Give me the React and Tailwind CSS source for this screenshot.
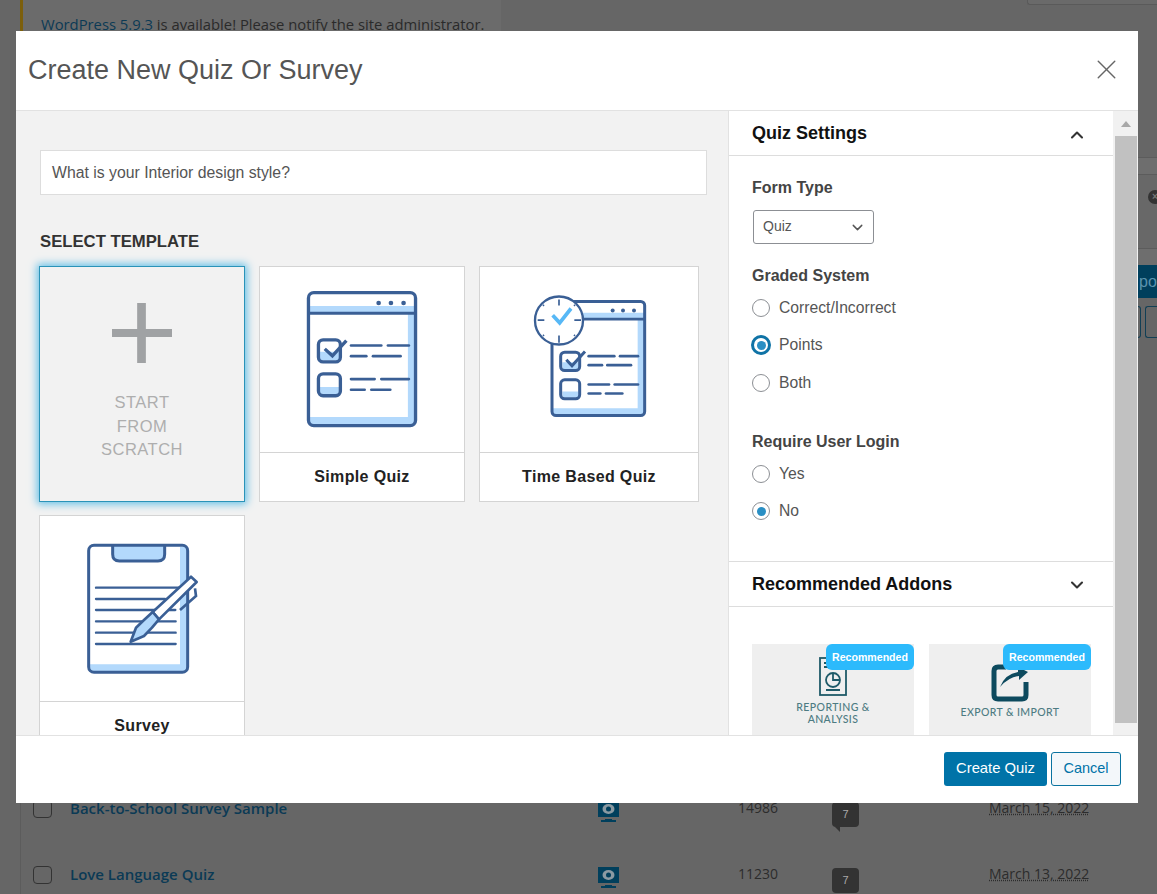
import { ChevronUp, ChevronDown, X } from 'lucide-react';

const blue = '#3a5f95';
const light = '#b3d9fc';

function QuizLines({ rows, width = 8 }) {
  return rows.map(([x1, x2, y], i) => (
    <line key={i} x1={x1} x2={x2} y1={y} y2={y} stroke={blue} strokeWidth={width} strokeLinecap="round" />
  ));
}

function SimpleQuizIcon() {
  return (
    <svg width="118" height="143" viewBox="130 70 354 430" fill="none">
      <rect x="146" y="84" width="322" height="400" rx="16" fill="#fff" />
      <path d="M146 124H468V146H146Z" fill={light} />
      <path d="M445 146H468V470Q468 484 454 484H160Q146 484 146 470V458H445Z" fill={light} />
      <rect x="146" y="84" width="322" height="400" rx="16" stroke={blue} strokeWidth="10" />
      <line x1="146" x2="468" y1="146" y2="146" stroke={blue} strokeWidth="9" />
      <circle cx="357" cy="115" r="7" fill={blue} />
      <circle cx="394" cy="115" r="7" fill={blue} />
      <circle cx="432" cy="115" r="7" fill={blue} />
      <path d="M180 262H238V278Q238 288 226 288H190Q180 288 180 278Z" fill={light} />
      <rect x="176" y="226" width="66" height="66" rx="14" stroke={blue} strokeWidth="10" />
      <path d="M195 253L218 274L260 228" stroke={blue} strokeWidth="10" />
      <path d="M180 368H238V380Q238 391 226 391H190Q180 391 180 380Z" fill={light} />
      <rect x="176" y="328" width="66" height="66" rx="14" stroke={blue} strokeWidth="10" />
      <QuizLines rows={[[274, 365, 243], [385, 448, 243], [274, 320, 275], [340, 423, 275], [274, 345, 344], [365, 448, 344], [274, 315, 376], [335, 392, 376]]} />
    </svg>
  );
}

function TimeQuizIcon() {
  return (
    <svg width="115" height="127" viewBox="155 85 345 380" fill="none" className="mb-[6px]">
      <rect x="215" y="110" width="278" height="342" rx="12" fill="#fff" />
      <path d="M215 144H493V163H215Z" fill={light} />
      <path d="M472 163H493V440Q493 452 481 452H227Q215 452 215 440V430H472Z" fill={light} />
      <rect x="215" y="110" width="278" height="342" rx="12" stroke={blue} strokeWidth="9" />
      <line x1="215" x2="493" y1="163" y2="163" stroke={blue} strokeWidth="8" />
      <circle cx="397" cy="137" r="6" fill={blue} />
      <circle cx="428" cy="137" r="6" fill={blue} />
      <circle cx="461" cy="137" r="6" fill={blue} />
      <circle cx="236" cy="167" r="72" fill="#fff" stroke={blue} strokeWidth="7" />
      <path d="M236 104V122M236 212V234M172 166H192M282 166H302" stroke={blue} strokeWidth="5" />
      <path d="M188 120L191 123M284 120L281 123M188 213L191 210M284 213L281 210" stroke={blue} strokeWidth="5" />
      <path d="M217 151L238 174L272 131" stroke="#57b8f6" strokeWidth="11" />
      <path d="M246 292H294V306Q294 314 284 314H254Q246 314 246 306Z" fill={light} />
      <rect x="241" y="262" width="57" height="55" rx="12" stroke={blue} strokeWidth="9" />
      <path d="M258 285L275 303L314 260" stroke={blue} strokeWidth="9" />
      <path d="M246 380H294V392Q294 399 284 399H254Q246 399 246 392Z" fill={light} />
      <rect x="241" y="345" width="57" height="57" rx="12" stroke={blue} strokeWidth="9" />
      <QuizLines rows={[[325, 402, 274], [419, 473, 274], [325, 365, 301], [381, 452, 301], [325, 386, 359], [403, 473, 359], [325, 360, 386], [377, 426, 386]]} />
    </svg>
  );
}

function SurveyIcon() {
  return (
    <svg width="115" height="135" viewBox="165 90 345 405" fill="none">
      <rect x="176" y="103" width="297" height="381" rx="16" fill="#fff" />
      <path d="M450 107H460Q473 107 473 120V470Q473 484 460 484H190Q176 484 176 470V460H450Z" fill={light} />
      <path d="M248 103V130Q248 150 268 150H384Q404 150 404 130V103Z" fill={light} />
      <rect x="176" y="103" width="297" height="381" rx="16" stroke={blue} strokeWidth="9" />
      <path d="M248 103V130Q248 150 268 150H384Q404 150 404 130V103" stroke={blue} strokeWidth="9" />
      <path d="M198 230H450M198 264H405M198 297H375M412 297H436M198 331H437M198 365H437M198 399H437" stroke={blue} strokeWidth="7" strokeLinecap="round" />
      <path d="M368 303L483 197L500 213L387 325Z" fill="#fff" stroke={blue} strokeWidth="8" strokeLinejoin="round" />
      <path d="M368 303L342 327L318 350L302 392L342 375L366 350L387 325Z" fill={light} stroke={blue} strokeWidth="8" strokeLinejoin="round" />
      <path d="M495 232L498 255L450 297" stroke={blue} strokeWidth="8" />
    </svg>
  );
}

function TemplateCard({ name, width, children }) {
  return (
    <div className={`${width} h-[236px] shrink-0 flex flex-col bg-white border border-[#d4d4d4]`}>
      <div className="h-[186px] shrink-0 flex items-center justify-center border-b border-[#d4d4d4]">
        {children}
      </div>
      <div className="flex-1 flex items-center justify-center text-[16px] font-bold text-[#222] tracking-[0.35px]">
        {name}
      </div>
    </div>
  );
}

function Radio({ label, checked, strong, className }) {
  return (
    <div className={`flex items-center h-[20px] ${className}`}>
      {strong ? (
        <span className="w-[20px] h-[20px] mr-[8px] -ml-[1px] shrink-0 rounded-full border-[3px] border-[#0f73a6] flex items-center justify-center">
          <span className="w-[9px] h-[9px] rounded-full bg-[#2a8fc4]" />
        </span>
      ) : (
        <span className="w-[18px] h-[18px] mr-[9px] shrink-0 rounded-full border border-[#8c8f94] flex items-center justify-center">
          {checked && <span className="w-[9px] h-[9px] rounded-full bg-[#2a8fc4]" />}
        </span>
      )}
      <span className="text-[15.7px] text-[#555]">{label}</span>
    </div>
  );
}

function Badge() {
  return (
    <div className="absolute top-0 right-0 h-[26px] w-[88px] pt-[1px] flex items-center justify-center rounded-[6px] bg-[#2cbafc] text-white text-[10.6px] font-bold">
      Recommended
    </div>
  );
}

function PreviewIcon() {
  return (
    <svg width="21" height="21" viewBox="0 0 21 21" className="shrink-0 mt-[2px]">
      <rect width="21" height="16" fill="#003f5c" />
      <ellipse cx="10.5" cy="8" rx="6" ry="5" fill="#8a9aa2" />
      <circle cx="10.5" cy="8" r="2.5" fill="#003f5c" />
      <path d="M7 18H14V19H18V21H3V19H7Z" fill="#003f5c" />
    </svg>
  );
}

function BackRow({ title, num, date, tail, className }) {
  return (
    <div className={`flex items-start ml-[12px] ${className}`}>
      <span className="w-[19px] h-[18px] mt-[1px] shrink-0 rounded-[4px] border border-[#333]" />
      <span className="w-[528px] ml-[18px] shrink-0 text-[15px] font-semibold text-[#0b3a55] font-['Open_Sans',sans-serif] leading-[18px]">{title}</span>
      <PreviewIcon />
      <span className="w-[40px] ml-[119px] shrink-0 text-[14px] text-[#2c2c2c] font-['Open_Sans',sans-serif] leading-[18px]">{num}</span>
      <span className="relative w-[27px] h-[25px] mt-[3px] ml-[54px] shrink-0 rounded-[4px] bg-[#333] text-[11px] text-[#aaa] flex items-center justify-center">
        7
        {tail && <span className="absolute left-[3px] top-full w-0 h-0 border-l-[5px] border-l-transparent border-t-[5px] border-t-[#333]" />}
      </span>
      <span className="ml-[130px] text-[14px] text-[#2c2c2c] font-['Open_Sans',sans-serif] leading-[18px] underline decoration-dotted">{date}</span>
    </div>
  );
}

export default function App() {
  return (
    <div className="relative w-[1157px] h-[894px] overflow-hidden bg-[#666] font-['Liberation_Sans',Arial,sans-serif]">
      {/* dimmed wordpress page behind the modal */}
      <div className="flex flex-col h-full">
        <div className="flex items-start h-[157px] shrink-0">
          <div className="ml-[20px] w-[481px] h-[40px] pl-[18px] pt-[14px] border-l-[3px] border-[#7c5f0c] bg-[#6b6b6b] text-[14.8px] text-[#2a2a2a] font-['Open_Sans',sans-serif] leading-[20px] whitespace-nowrap">
            <span className="text-[#0b3a55]">WordPress 5.9.3</span> is available! Please notify the site administrator.
          </div>
          <div className="ml-auto w-[130px] h-[5px] rounded-bl-[3px] border-l border-b border-[#5a5a5a] bg-[#6a6a6a]" />
        </div>
        <div className="self-end w-[19px] flex flex-col shrink-0 overflow-hidden">
          <div className="h-[18px] bg-[#6e6e6e] border-y border-[#5c5c5c]" />
          <div className="h-[73px] flex items-start pt-[15px] pl-[10px] bg-[#686868]">
            <span className="w-[14px] h-[14px] shrink-0 rounded-full bg-[#333] flex items-center justify-center text-[10px] font-bold leading-none text-[#777]">×</span>
          </div>
          <div className="h-[17px] bg-[#6e6e6e] border-t border-[#5c5c5c]" />
          <div className="h-[33px] pl-[1px] bg-[#003f5c] text-[16px] leading-[33px] text-[#5b93ad]">po</div>
          <div className="h-[40px] flex gap-[4px] pt-[8px]">
            <span className="w-[3px] h-[32px] shrink-0 border-y border-r rounded-r-[3px] border-[#123f55]" />
            <span className="w-[12px] h-[32px] shrink-0 border-y border-l rounded-l-[3px] border-[#123f55]" />
          </div>
        </div>
        <div className="flex-1 ml-[20px] mt-[461px] border-l border-[#5c5c5c] flex flex-col">
          <BackRow title="Back-to-School Survey Sample" num="14986" date="March 15, 2022" tail />
          <BackRow title="Love Language Quiz" num="11230" date="March 13, 2022" className="mt-[38px]" />
        </div>
      </div>

      {/* modal */}
      <div className="absolute left-[16px] top-[31px] w-[1122px] h-[772px] flex flex-col bg-white">
        <div className="h-[80px] shrink-0 flex items-center justify-between pl-[12px] pr-[15px] border-b border-[#e2e2e2]">
          <h1 className="text-[27px] text-[#555]">Create New Quiz Or Survey</h1>
          <X size={33} strokeWidth={1} className="text-[#666] mb-[3px]" />
        </div>

        <div className="flex-1 min-h-0 flex">
          <div className="w-[713px] shrink-0 bg-[#f2f2f2] overflow-hidden pl-[24px] pt-[39px] border-r border-[#e2e2e2]">
            <div className="w-[667px] h-[45px] flex items-center px-[11px] bg-white border border-[#ddd] text-[15.8px] text-[#555]">
              What is your Interior design style?
            </div>
            <div className="mt-[38px] mb-[15px] text-[16.7px] leading-[18px] font-bold text-[#333]">SELECT TEMPLATE</div>
            <div className="flex flex-wrap w-[680px] -ml-[1px] gap-x-[14px] gap-y-[13px]">
              <div className="w-[206px] h-[236px] shrink-0 flex flex-col items-center bg-[#f2f2f2] border border-[#2a93b8] shadow-[0_0_8px_2px_#64bfe6]">
                <svg width="60" height="60" viewBox="0 0 62 60" preserveAspectRatio="none" className="mt-[36px]">
                  <path d="M26 0H35V26H62V34H35V60H26V34H0V26H26Z" fill="#a0a2a4" />
                </svg>
                <div className="mt-[28px] text-center text-[16.5px] leading-[23.5px] tracking-[0.5px] text-[#aeaeae]">
                  START<br />FROM<br />SCRATCH
                </div>
              </div>
              <TemplateCard name="Simple Quiz" width="w-[206px]"><SimpleQuizIcon /></TemplateCard>
              <TemplateCard name="Time Based Quiz" width="w-[220px]"><TimeQuizIcon /></TemplateCard>
              <TemplateCard name="Survey" width="w-[206px]"><SurveyIcon /></TemplateCard>
            </div>
          </div>

          <div className="w-[384px] shrink-0 overflow-hidden">
            <div className="h-[45px] flex items-center justify-between pl-[23px] pr-[26px] border-b border-[#ddd]">
              <span className="text-[18px] font-bold text-[#111]">Quiz Settings</span>
              <ChevronUp size={20} strokeWidth={2.5} className="text-[#333] mt-[3px]" />
            </div>
            <div className="h-[406px] pl-[23px] pt-[22px] border-b border-[#ddd]">
              <div className="text-[16px] leading-[20px] font-bold text-[#444]">Form Type</div>
              <div className="mt-[12px] ml-[1px] w-[121px] h-[34px] flex items-center justify-between pl-[9px] pr-[7px] pb-[2px] rounded-[3px] border border-[#8c8f94] text-[14px] text-[#555]">
                Quiz
                <ChevronDown size={17} strokeWidth={2} className="text-[#555] mt-[3px]" />
              </div>
              <div className="mt-[22px] text-[16px] leading-[20px] font-bold text-[#444]">Graded System</div>
              <Radio label="Correct/Incorrect" className="mt-[12px]" />
              <Radio label="Points" strong className="mt-[17px]" />
              <Radio label="Both" className="mt-[18px]" />
              <div className="mt-[39px] text-[16px] leading-[20px] font-bold text-[#444]">Require User Login</div>
              <Radio label="Yes" className="mt-[12px]" />
              <Radio label="No" checked className="mt-[17px]" />
            </div>
            <div className="h-[45px] flex items-center justify-between pl-[23px] pr-[26px] border-b border-[#ddd]">
              <span className="text-[18px] font-bold text-[#111] mt-[1px]">Recommended Addons</span>
              <ChevronDown size={20} strokeWidth={2.5} className="text-[#333] mt-[1px]" />
            </div>
            <div className="flex gap-[15px] pl-[23px] pt-[37px]">
              <div className="relative w-[162px] h-[100px] shrink-0 bg-[#efefef] flex flex-col items-center">
                <svg width="28" height="39" viewBox="0 0 28 39" fill="none" stroke="#1e5a68" strokeWidth="1.8" className="mt-[13px]">
                  <rect x="1" y="1" width="26" height="37" />
                  <path d="M5 6H11M5 10H9" />
                  <circle cx="14" cy="23" r="7" />
                  <path d="M14 16V23H21M7 33H21" />
                </svg>
                <div className="mt-[5px] text-center text-[10.5px] leading-[12px] font-medium tracking-[0.4px] text-[#4d7b82] font-['Lato',sans-serif]">REPORTING &amp;<br />ANALYSIS</div>
                <Badge />
              </div>
              <div className="relative w-[162px] h-[100px] shrink-0 bg-[#efefef] flex flex-col items-center">
                <svg width="38" height="38" viewBox="0 0 38 38" fill="none" className="mt-[20px]">
                  <path d="M15 3H7Q3 3 3 7V31Q3 35 7 35H31Q35 35 35 31V18" stroke="#0d4a5e" strokeWidth="5" />
                  <path d="M9 23Q14 10 27 8V3L37 8L28 16V12Q18 13 9 23Z" fill="#0d4a5e" />
                </svg>
                <div className="mt-[5px] text-[10.5px] leading-[11px] font-medium tracking-[0.4px] text-[#4d7b82] font-['Lato',sans-serif]">EXPORT &amp; IMPORT</div>
                <Badge />
              </div>
            </div>
          </div>

          <div className="w-[25px] shrink-0 flex flex-col items-center bg-[#f1f1f1]">
            <div className="h-[25px] shrink-0 flex items-center justify-center">
              <span className="w-0 h-0 border-x-[5px] border-x-transparent border-b-[6px] border-b-[#a8a8a8]" />
            </div>
            <div className="w-[22px] h-[587px] bg-[#c1c1c1]" />
          </div>
        </div>

        <div className="h-[68px] shrink-0 flex items-center justify-end gap-[4px] pr-[17px] pb-[2px] border-t border-[#e2e2e2]">
          <button className="w-[103px] h-[34px] rounded-[3px] bg-[#0073a8] text-white text-[14.8px]">Create Quiz</button>
          <button className="w-[70px] h-[34px] rounded-[3px] bg-[#f3f7fa] border border-[#0a73a0] text-[#0073a8] text-[14.5px]">Cancel</button>
        </div>
      </div>
    </div>
  );
}
